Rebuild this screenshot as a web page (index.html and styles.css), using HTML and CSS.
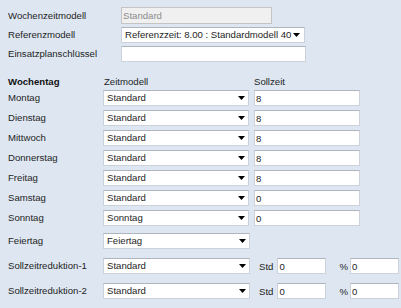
FILE: index.html
```html
<!DOCTYPE html>
<html lang="de">
<head>
<meta charset="utf-8">
<title>Wochenzeitmodell</title>
<link rel="stylesheet" href="styles.css">
</head>
<body>
<div class="form">
  <div class="top">
    <label class="lbl">Wochenzeitmodell</label>
    <input class="field field-disabled" type="text" value="Standard" disabled>
    <label class="lbl">Referenzmodell</label>
    <div class="select select-wide"><span class="sel-text">Referenzzeit: 8.00 : Standardmodell 40 Stunden</span><svg class="arrow" width="7" height="4" viewBox="0 0 7 4"><polygon points="0,0 7,0 3.5,4" fill="#000"/></svg></div>
    <label class="lbl">Einsatzplanschlüssel</label>
    <input class="field field-wide" type="text" value="">
  </div>

  <div class="week">
    <div class="hd hd-bold">Wochentag</div>
    <div class="hd hd-model">Zeitmodell</div>
    <div class="hd">Sollzeit</div>

    <div class="lbl">Montag</div>
    <div class="select"><span class="sel-text">Standard</span><svg class="arrow" width="7" height="4" viewBox="0 0 7 4"><polygon points="0,0 7,0 3.5,4" fill="#000"/></svg></div>
    <input class="field field-soll" type="text" value="8">

    <div class="lbl">Dienstag</div>
    <div class="select"><span class="sel-text">Standard</span><svg class="arrow" width="7" height="4" viewBox="0 0 7 4"><polygon points="0,0 7,0 3.5,4" fill="#000"/></svg></div>
    <input class="field field-soll" type="text" value="8">

    <div class="lbl">Mittwoch</div>
    <div class="select"><span class="sel-text">Standard</span><svg class="arrow" width="7" height="4" viewBox="0 0 7 4"><polygon points="0,0 7,0 3.5,4" fill="#000"/></svg></div>
    <input class="field field-soll" type="text" value="8">

    <div class="lbl">Donnerstag</div>
    <div class="select"><span class="sel-text">Standard</span><svg class="arrow" width="7" height="4" viewBox="0 0 7 4"><polygon points="0,0 7,0 3.5,4" fill="#000"/></svg></div>
    <input class="field field-soll" type="text" value="8">

    <div class="lbl">Freitag</div>
    <div class="select"><span class="sel-text">Standard</span><svg class="arrow" width="7" height="4" viewBox="0 0 7 4"><polygon points="0,0 7,0 3.5,4" fill="#000"/></svg></div>
    <input class="field field-soll" type="text" value="8">

    <div class="lbl">Samstag</div>
    <div class="select"><span class="sel-text">Standard</span><svg class="arrow" width="7" height="4" viewBox="0 0 7 4"><polygon points="0,0 7,0 3.5,4" fill="#000"/></svg></div>
    <input class="field field-soll" type="text" value="0">

    <div class="lbl">Sonntag</div>
    <div class="select"><span class="sel-text">Sonntag</span><svg class="arrow" width="7" height="4" viewBox="0 0 7 4"><polygon points="0,0 7,0 3.5,4" fill="#000"/></svg></div>
    <input class="field field-soll" type="text" value="0">
  </div>

  <div class="extra">
    <div class="lbl">Feiertag</div>
    <div class="select select-ext"><span class="sel-text">Feiertag</span><svg class="arrow" width="7" height="4" viewBox="0 0 7 4"><polygon points="0,0 7,0 3.5,4" fill="#000"/></svg></div>
    <div></div>

    <div class="lbl">Sollzeitreduktion-1</div>
    <div class="select select-ext"><span class="sel-text">Standard</span><svg class="arrow" width="7" height="4" viewBox="0 0 7 4"><polygon points="0,0 7,0 3.5,4" fill="#000"/></svg></div>
    <div class="red">
      <span class="unit">Std</span><input class="field field-red" type="text" value="0">
      <span class="unit unit-pct">%</span><input class="field field-red" type="text" value="0">
    </div>

    <div class="lbl">Sollzeitreduktion-2</div>
    <div class="select select-ext"><span class="sel-text">Standard</span><svg class="arrow" width="7" height="4" viewBox="0 0 7 4"><polygon points="0,0 7,0 3.5,4" fill="#000"/></svg></div>
    <div class="red">
      <span class="unit">Std</span><input class="field field-red" type="text" value="0">
      <span class="unit unit-pct">%</span><input class="field field-red" type="text" value="0">
    </div>
  </div>
</div>
</body>
</html>
```

FILE: styles.css
```css
html, body {
  margin: 0;
  padding: 0;
}

body {
  width: 401px;
  height: 308px;
  overflow: hidden;
  background: #dde6f1;
  font-family: "Liberation Sans", Arial, sans-serif;
  font-size: 9.6px;
  color: #1e1e1e;
}

.form {
  padding: 7px 0 0 8px;
}

.lbl {
  line-height: 12px;
}

.top {
  display: grid;
  grid-template-columns: 113px auto;
  row-gap: 3px;
  align-items: center;
}

.field {
  box-sizing: border-box;
  height: 16px;
  margin: 0;
  padding: 0 0 0 1px;
  border: 1px solid #cbd2db;
  border-top-color: #aeb5bf;
  background: #fff;
  font-family: "Liberation Sans", Arial, sans-serif;
  font-size: 9.6px;
  color: #1e1e1e;
  outline: none;
  border-radius: 0;
}

.field-disabled {
  width: 151px;
  height: 17px;
  background: #f0f0f0;
  border-color: #c4c4c4;
  color: #8c8c8c;
  padding-left: 1px;
}

.field-wide {
  width: 185px;
}

.select {
  box-sizing: border-box;
  display: flex;
  align-items: center;
  width: 146px;
  height: 16px;
  border: 1px solid #cbd2db;
  border-top-color: #aeb5bf;
  background: #fff;
  padding-left: 3px;
}

.select-wide {
  width: 184px;
}

.select-ext {
  width: 147px;
}

.sel-text {
  flex: 1;
  min-width: 0;
  overflow: hidden;
  white-space: nowrap;
  line-height: 14px;
}

.select .arrow {
  flex: none;
  margin-right: 3px;
}

.select-wide .arrow {
  margin-right: 4px;
}

.week {
  display: grid;
  grid-template-columns: 95px 151px auto;
  row-gap: 4px;
  align-items: center;
  margin-top: 14px;
}

.hd {
  line-height: 11px;
  height: 11px;
  margin-bottom: -1px;
}

.hd-bold {
  font-weight: bold;
  color: #111;
}

.hd-model {
  padding-left: 1px;
}

.field-soll {
  width: 106px;
}

.extra {
  display: grid;
  grid-template-columns: 95px 151px auto;
  row-gap: 9px;
  align-items: center;
  margin-top: 7px;
}

.red {
  display: flex;
  align-items: center;
  padding-left: 5px;
}

.unit {
  margin-right: 4px;
}

.unit-pct {
  margin-left: 13px;
  margin-right: 2px;
}

.field-red {
  width: 49px;
}
```
